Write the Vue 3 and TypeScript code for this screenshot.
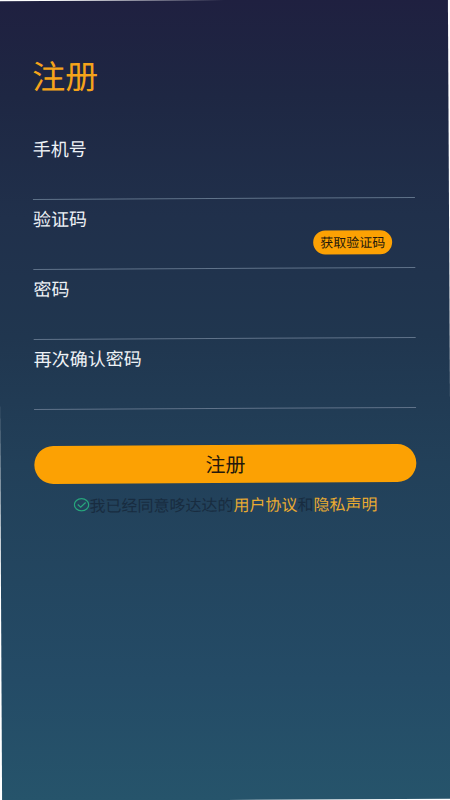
<script setup lang="ts">
import { reactive, ref } from 'vue'

type FieldKey = 'phone' | 'code' | 'password' | 'confirm'

interface Field {
  key: FieldKey
  label: string
  type: string
}

const fields: Field[] = [
  { key: 'phone', label: '手机号', type: 'tel' },
  { key: 'code', label: '验证码', type: 'text' },
  { key: 'password', label: '密码', type: 'password' },
  { key: 'confirm', label: '再次确认密码', type: 'password' },
]

const form = reactive<Record<FieldKey, string>>({
  phone: '',
  code: '',
  password: '',
  confirm: '',
})
const agreed = ref(true)
</script>

<template>
  <div class="stage">
    <main class="page">
      <h1 class="title">注册</h1>
      <form @submit.prevent>
        <div v-for="field in fields" :key="field.key" class="field">
          <label class="label" :for="field.key">{{ field.label }}</label>
          <div class="entry">
            <input :id="field.key" v-model="form[field.key]" class="input" :type="field.type" />
            <button v-if="field.key === 'code'" class="send" type="button">获取验证码</button>
          </div>
        </div>
        <button class="submit" type="submit">注册</button>
        <div class="agreement">
          <label class="consent">
            <input v-model="agreed" class="tick" type="checkbox" />
            <svg class="mark" viewBox="0 0 16 14" fill="none" stroke="currentColor">
              <ellipse cx="8" cy="7" rx="7.2" ry="6.1" stroke-width="1.3" />
              <path v-if="agreed" d="M4.2 6.8l2.9 2.6 5-4.6" stroke-width="1.3" />
            </svg>
            <span>我已经同意哆达达的</span>
          </label>
          <a class="link" href="#terms">用户协议</a>
          <span>和</span>
          <a class="link" href="#privacy">隐私声明</a>
        </div>
      </form>
    </main>
  </div>
</template>

<style>
body {
  margin: 0;
  background: #fff;
}
</style>

<style scoped>
.stage {
  overflow: hidden;
}

.page {
  box-sizing: border-box;
  min-height: 100vh;
  padding: 50px 34px 32px;
  background: linear-gradient(#1f2040 0%, #1e2743 12%, #20304b 27%, #20364f 42%, #224059 58%, #244b66 85%, #26546b 100%);
  color: #eef2f6;
  font-family: 'Noto Sans CJK SC', sans-serif;
  transform: rotate(-0.3deg);
}

.title {
  margin: 0 0 31px;
  color: #f5a31a;
  font-size: 33px;
  font-weight: 400;
  line-height: 48px;
}

.field {
  display: flex;
  flex-direction: column;
  gap: 2px;
  padding-top: 6px;
  border-bottom: 1px solid #60738a;
}

.label {
  align-self: flex-start;
  font-size: 18px;
  line-height: 24px;
}

.entry {
  display: flex;
  align-items: center;
  height: 37px;
  padding-right: 23px;
}

.input {
  flex: 1;
  min-width: 0;
  height: 100%;
  padding: 0;
  border: 0;
  outline: 0;
  background: none;
  color: inherit;
  font: inherit;
}

.send,
.submit {
  border: 0;
  background: #fca103;
  color: #24180c;
  font-family: inherit;
  cursor: pointer;
}

.send {
  align-self: flex-start;
  height: 24px;
  padding: 0 7px;
  border-radius: 12px;
  font-size: 13px;
  line-height: 24px;
}

.submit {
  display: block;
  width: 100%;
  height: 38px;
  margin-top: 36px;
  padding: 0;
  border-radius: 19px;
  font-size: 20px;
  line-height: 38px;
}

.agreement {
  display: flex;
  justify-content: center;
  margin-top: 9px;
  color: #182c40;
  font-size: 16px;
  line-height: 24px;
  white-space: nowrap;
}

.consent {
  display: flex;
  align-items: center;
  position: relative;
}

.tick {
  position: absolute;
  left: 0;
  width: 16px;
  height: 14px;
  margin: 0;
  opacity: 0;
}

.mark {
  width: 16px;
  height: 14px;
  color: #27a57c;
}

.link {
  color: #e9ab31;
  text-decoration: none;
}
</style>
